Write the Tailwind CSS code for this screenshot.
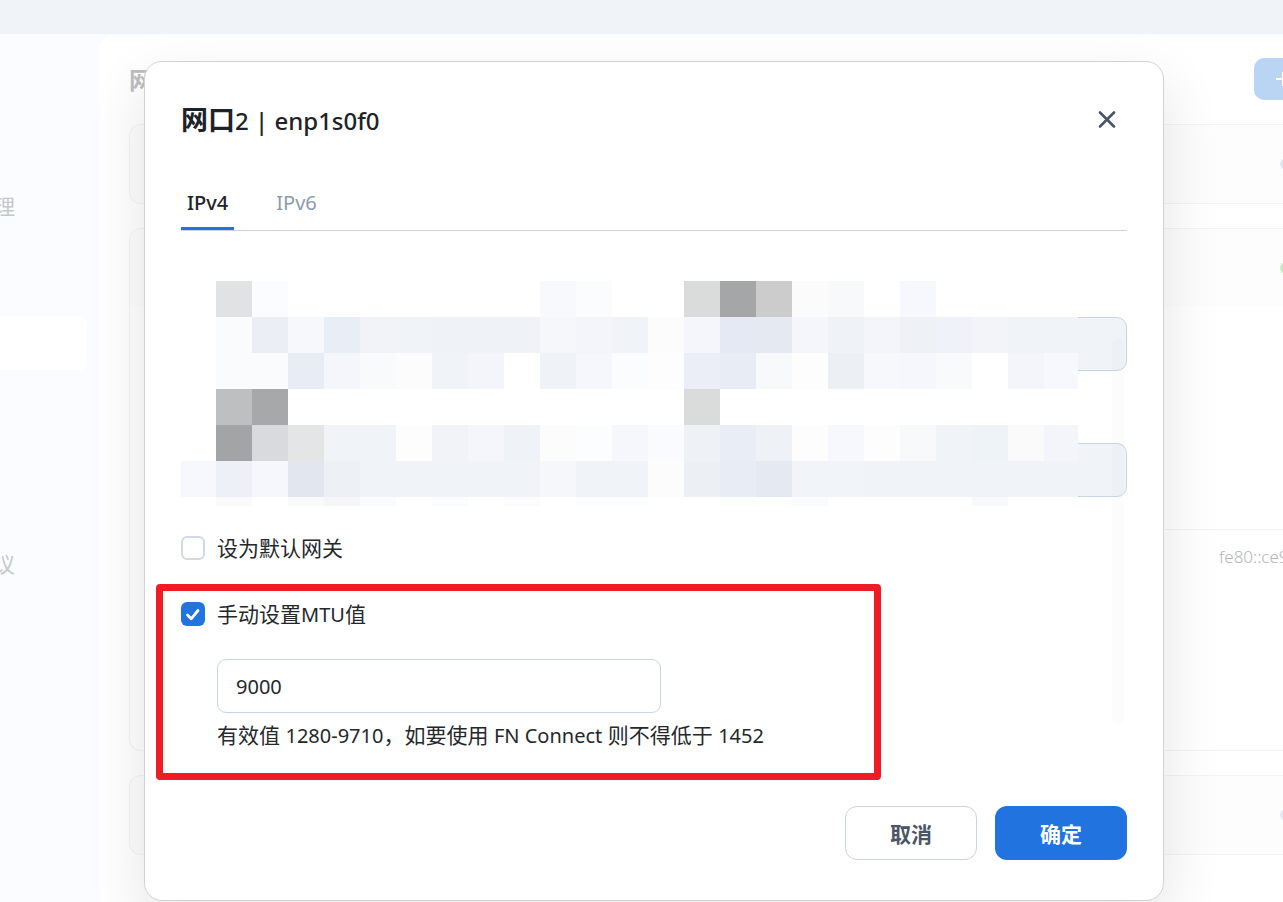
<!DOCTYPE html>
<html lang="zh-CN">
<head>
<meta charset="utf-8">
<meta name="viewport" content="width=device-width, initial-scale=1">
<title>网口2 | enp1s0f0</title>
<script src="https://cdn.jsdelivr.net/npm/@tailwindcss/browser@4"></script>
</head>
<body class="relative flex h-screen min-h-[902px] flex-col overflow-hidden bg-white font-['Noto_Sans','Noto_Sans_CJK_SC',sans-serif] text-[21px] text-[#24282d]">

<!-- Dimmed settings window behind the dialog -->
<header class="relative z-20 h-[34px] shrink-0 bg-[#f0f4f9]"></header>
<div class="flex flex-1 bg-[#fafcff]">
  <nav class="flex w-[99px] shrink-0 flex-col items-start pt-[154px] text-[#c6c7c9]">
    <a href="#" class="-ml-[27px] leading-9">管理</a>
    <span class="mt-[92px] h-[54px] w-[87px] rounded-r-lg bg-white"></span>
    <a href="#" class="-ml-[27px] mt-[176px] leading-9">协议</a>
  </nav>
  <main class="min-w-0 flex-1 overflow-hidden rounded-tl-2xl bg-white pl-[30px]">
    <div class="flex h-[90px] items-center justify-between">
      <h1 class="pt-0.5 text-2xl font-bold text-[#bdbebf]">网口</h1>
      <button type="button" aria-label="添加" class="flex h-[42px] w-[29px] items-center overflow-hidden rounded-l-[10px] bg-[#bad4f4] pl-[22px] text-white">
        <svg class="size-4 shrink-0" viewBox="0 0 16 16" fill="none" stroke="currentColor" stroke-width="2"><path d="M0 8h14M7 1v14"/></svg>
      </button>
    </div>
    <section class="flex h-20 items-center justify-end overflow-hidden rounded-l-xl border border-r-0 border-[#f3f4f7] bg-[#fdfdfd]">
      <span class="-mr-[9px] size-3 rounded-full bg-[#e3e7ee]"></span>
    </section>
    <section class="mt-6 h-[523px] overflow-hidden rounded-l-xl border border-r-0 border-[#f3f4f7]">
      <div class="flex h-[78px] items-center justify-end bg-[#fdfdfd]">
        <span class="-mr-[9px] size-3 rounded-full bg-[#c8e8c8]"></span>
      </div>
      <div class="ml-9 h-[223px] border-b border-[#f3f4f7]"></div>
      <div class="flex h-[54px] items-center justify-end">
        <span class="w-16 whitespace-nowrap text-[17px] font-light text-[#b4b6ba]">fe80::ce9</span>
      </div>
    </section>
    <section class="mt-6 flex h-20 items-center justify-end overflow-hidden rounded-l-xl border border-r-0 border-[#f3f4f7] bg-[#fdfdfd]">
      <span class="-mr-[9px] size-3 rounded-full bg-[#e3e7ee]"></span>
    </section>
  </main>
</div>

<!-- Network port dialog -->
<div class="absolute inset-0 z-10 pt-[61px] pr-[119px] pl-36">
  <div role="dialog" aria-labelledby="title" class="relative flex flex-col rounded-[18px] border border-[#d2d3d4] bg-white px-9 pb-10 shadow-[0_22px_60px_rgba(0,0,0,0.11)]">
    <div class="flex h-[116px] items-center justify-between">
      <h2 id="title" class="text-2xl font-medium text-[#1e2328]"><span class="text-[27px] font-bold">网口</span>2 | enp1s0f0</h2>
      <button type="button" aria-label="关闭" class="grid size-10 place-items-center text-[#4a5568]">
        <svg class="size-5" viewBox="0 0 20 20" fill="none" stroke="currentColor" stroke-width="2.6" stroke-linecap="round"><path d="M3 2.5l14 14M17 2.5l-14 14"/></svg>
      </button>
    </div>

    <div role="tablist" class="flex h-[53px] gap-9 border-b border-[#cbd5e1] text-xl">
      <button type="button" role="tab" aria-selected="true" class="border-b-[3px] border-[#2173df] px-1.5 font-medium text-[#1e2328]">IPv4</button>
      <button type="button" role="tab" aria-selected="false" class="border-b-[3px] border-transparent px-1.5 text-[#8c9bb0]">IPv6</button>
    </div>

    <div class="relative grid grid-cols-2 gap-x-5 gap-y-[72px] pt-[86px]">
      <input disabled aria-label="参数 1" class="h-[54px] min-w-0 rounded-[10px] border border-[#cbd5e1] bg-[#f0f4f9]">
      <input disabled aria-label="参数 2" class="h-[54px] min-w-0 rounded-[10px] border border-[#cbd5e1] bg-[#f0f4f9]">
      <input disabled aria-label="参数 3" class="h-[54px] min-w-0 rounded-[10px] border border-[#cbd5e1] bg-[#f0f4f9]">
      <input disabled aria-label="参数 4" class="h-[54px] min-w-0 rounded-[10px] border border-[#cbd5e1] bg-[#f0f4f9]">
      <!-- Privacy mosaic over the address fields -->
      <div id="mosaic" aria-hidden="true" class="absolute top-[50px] right-[49px] left-0 grid grid-cols-[35px_repeat(23,36px)_1fr] grid-rows-[repeat(6,36px)_9px] bg-white"></div>
      <span class="absolute top-[108px] right-[3px] h-[385px] w-3 rounded-full bg-emerald-950/1"></span>
    </div>

    <label class="mt-[33px] flex h-9 items-center gap-3">
      <input type="checkbox" class="size-6 shrink-0 appearance-none rounded-md border-2 border-[#d0d9e4] bg-white">
      <span class="pt-0.5">设为默认网关</span>
    </label>

    <div class="relative mt-[30px]">
      <label class="flex h-9 items-center gap-3">
        <span class="relative size-6 shrink-0">
          <input type="checkbox" checked class="block size-6 appearance-none rounded-md bg-[#2173df]">
          <svg class="pointer-events-none absolute inset-0 size-6" viewBox="0 0 24 24" fill="none" stroke="#fff" stroke-width="2.8" stroke-linecap="round" stroke-linejoin="round"><path d="M6.5 13l3.7 3.8L17 8.5"/></svg>
        </span>
        <span class="pt-0.5">手动设置<span class="text-xl">MTU</span>值</span>
      </label>
      <div class="mt-[27px] flex flex-col pl-9">
        <input type="text" value="9000" aria-label="MTU值" aria-describedby="hint" class="h-[54px] w-[444px] rounded-[9px] border border-[#cbd5e1] bg-white px-[18px] text-xl">
        <p id="hint" class="mt-1.5 leading-8">有效值 <span class="text-xl">1280-9710</span>，如要使用 <span class="text-xl">FN Connect</span> 则不得低于 <span class="text-xl">1452</span></p>
      </div>
      <!-- Red highlight frame -->
      <div class="pointer-events-none absolute -top-3 -left-[25px] h-[196px] w-[725px] rounded border-[7px] border-[#ee1c25]"></div>
    </div>

    <div class="mt-[55px] flex justify-end gap-[18px] font-bold">
      <button type="button" class="h-[54px] w-[132px] rounded-xl border border-[#cbd5e1] bg-white pt-1 text-[#4a5568]">取消</button>
      <button type="button" class="h-[54px] w-[132px] rounded-xl bg-[#2173df] pt-1 text-white">确定</button>
    </div>
  </div>
</div>

<script>
const W = 'ffffff';
const rows = [
  [W,'e1e2e4','fbfcff',W,W,W,W,W,W,W,'f8f9fc','fbfcfe',W,W,'dadcdb','a5a6a8','cccccc','fbfbfb','f8f9fb',W,'f7f8fd',W,W,W,W],
  [W,'fafbfd','ebeef4','f7f8fb','e8eef6','f2f3f8','f0f3f8','eff3f8','eff3f8','eff3f8','f6f7fb','f4f5fa','f0f4f9','fcfcfc','f4f6fb','e4e9f3','e4e9f2','f4f6fb','eff3f8','f4f5fa','eef2f7','eff3f9','f3f4f9','f0f4f9','f0f4f9'],
  [W,'fafbfd','fafbfd','e8edf5','f5f6fb','f9fafc','fcfcfc','f0f4f9','f4f5fa',W,'eff3f8','f6f7fc','fbfcfe','fdfdfd','ebeef6','e7ecf5','f8f9fb','fdfdfd','ecf0f5','f7f8fb','f6f7fc','f9fafc',W,'f4f5fa','f7f8fd'],
  [W,'bebfc1','a7a8aa',W,W,W,W,W,W,W,W,W,W,W,'dadcdb',W,W,W,W,W,W,W,W,W,W],
  [W,'a3a4a6','d9dade','e4e5e6','f0f4f9','f0f4f9','fdfdfd','f2f3f8','f5f6fb','eff3f8','fcfcfc','fcfdfe','f6f7fc','fafbfe','eef1f6','e9edf5','eef1f6','fdfdfd','f7f8fd','fdfdfd','f8f9fb','f0f4f9','eef3f8','fafafa','f4f5fa'],
  ['f7f8fd','edf0f6','f6f7fc','e2e7ef','edf0f5','f0f4f9','f0f4f9','f0f4f8','f0f4f8','f0f4f9','f5f7fa','f0f3f8','f0f4f9','fcfcfc','ecf0f5','e8ecf5','e4e9f2','f1f5f9','f1f5f9','f0f4f9','f0f4f9','f0f4f9','f0f4f9','f0f4f9','f0f4f9'],
  [W,'fafafa',W,'f9fafa','f6f6f6','fafbfe',W,'fbfcfe',W,'fcfcfc',W,'fcfdfe','fcfdfe',W,W,'fdfdfd',W,'fafbfd',W,W,W,W,'f8f9fb',W,W]
];
const mosaic = document.getElementById('mosaic');
for (const color of rows.flat()) {
  const cell = document.createElement('i');
  cell.style.background = '#' + color;
  mosaic.append(cell);
}
</script>
</body>
</html>
